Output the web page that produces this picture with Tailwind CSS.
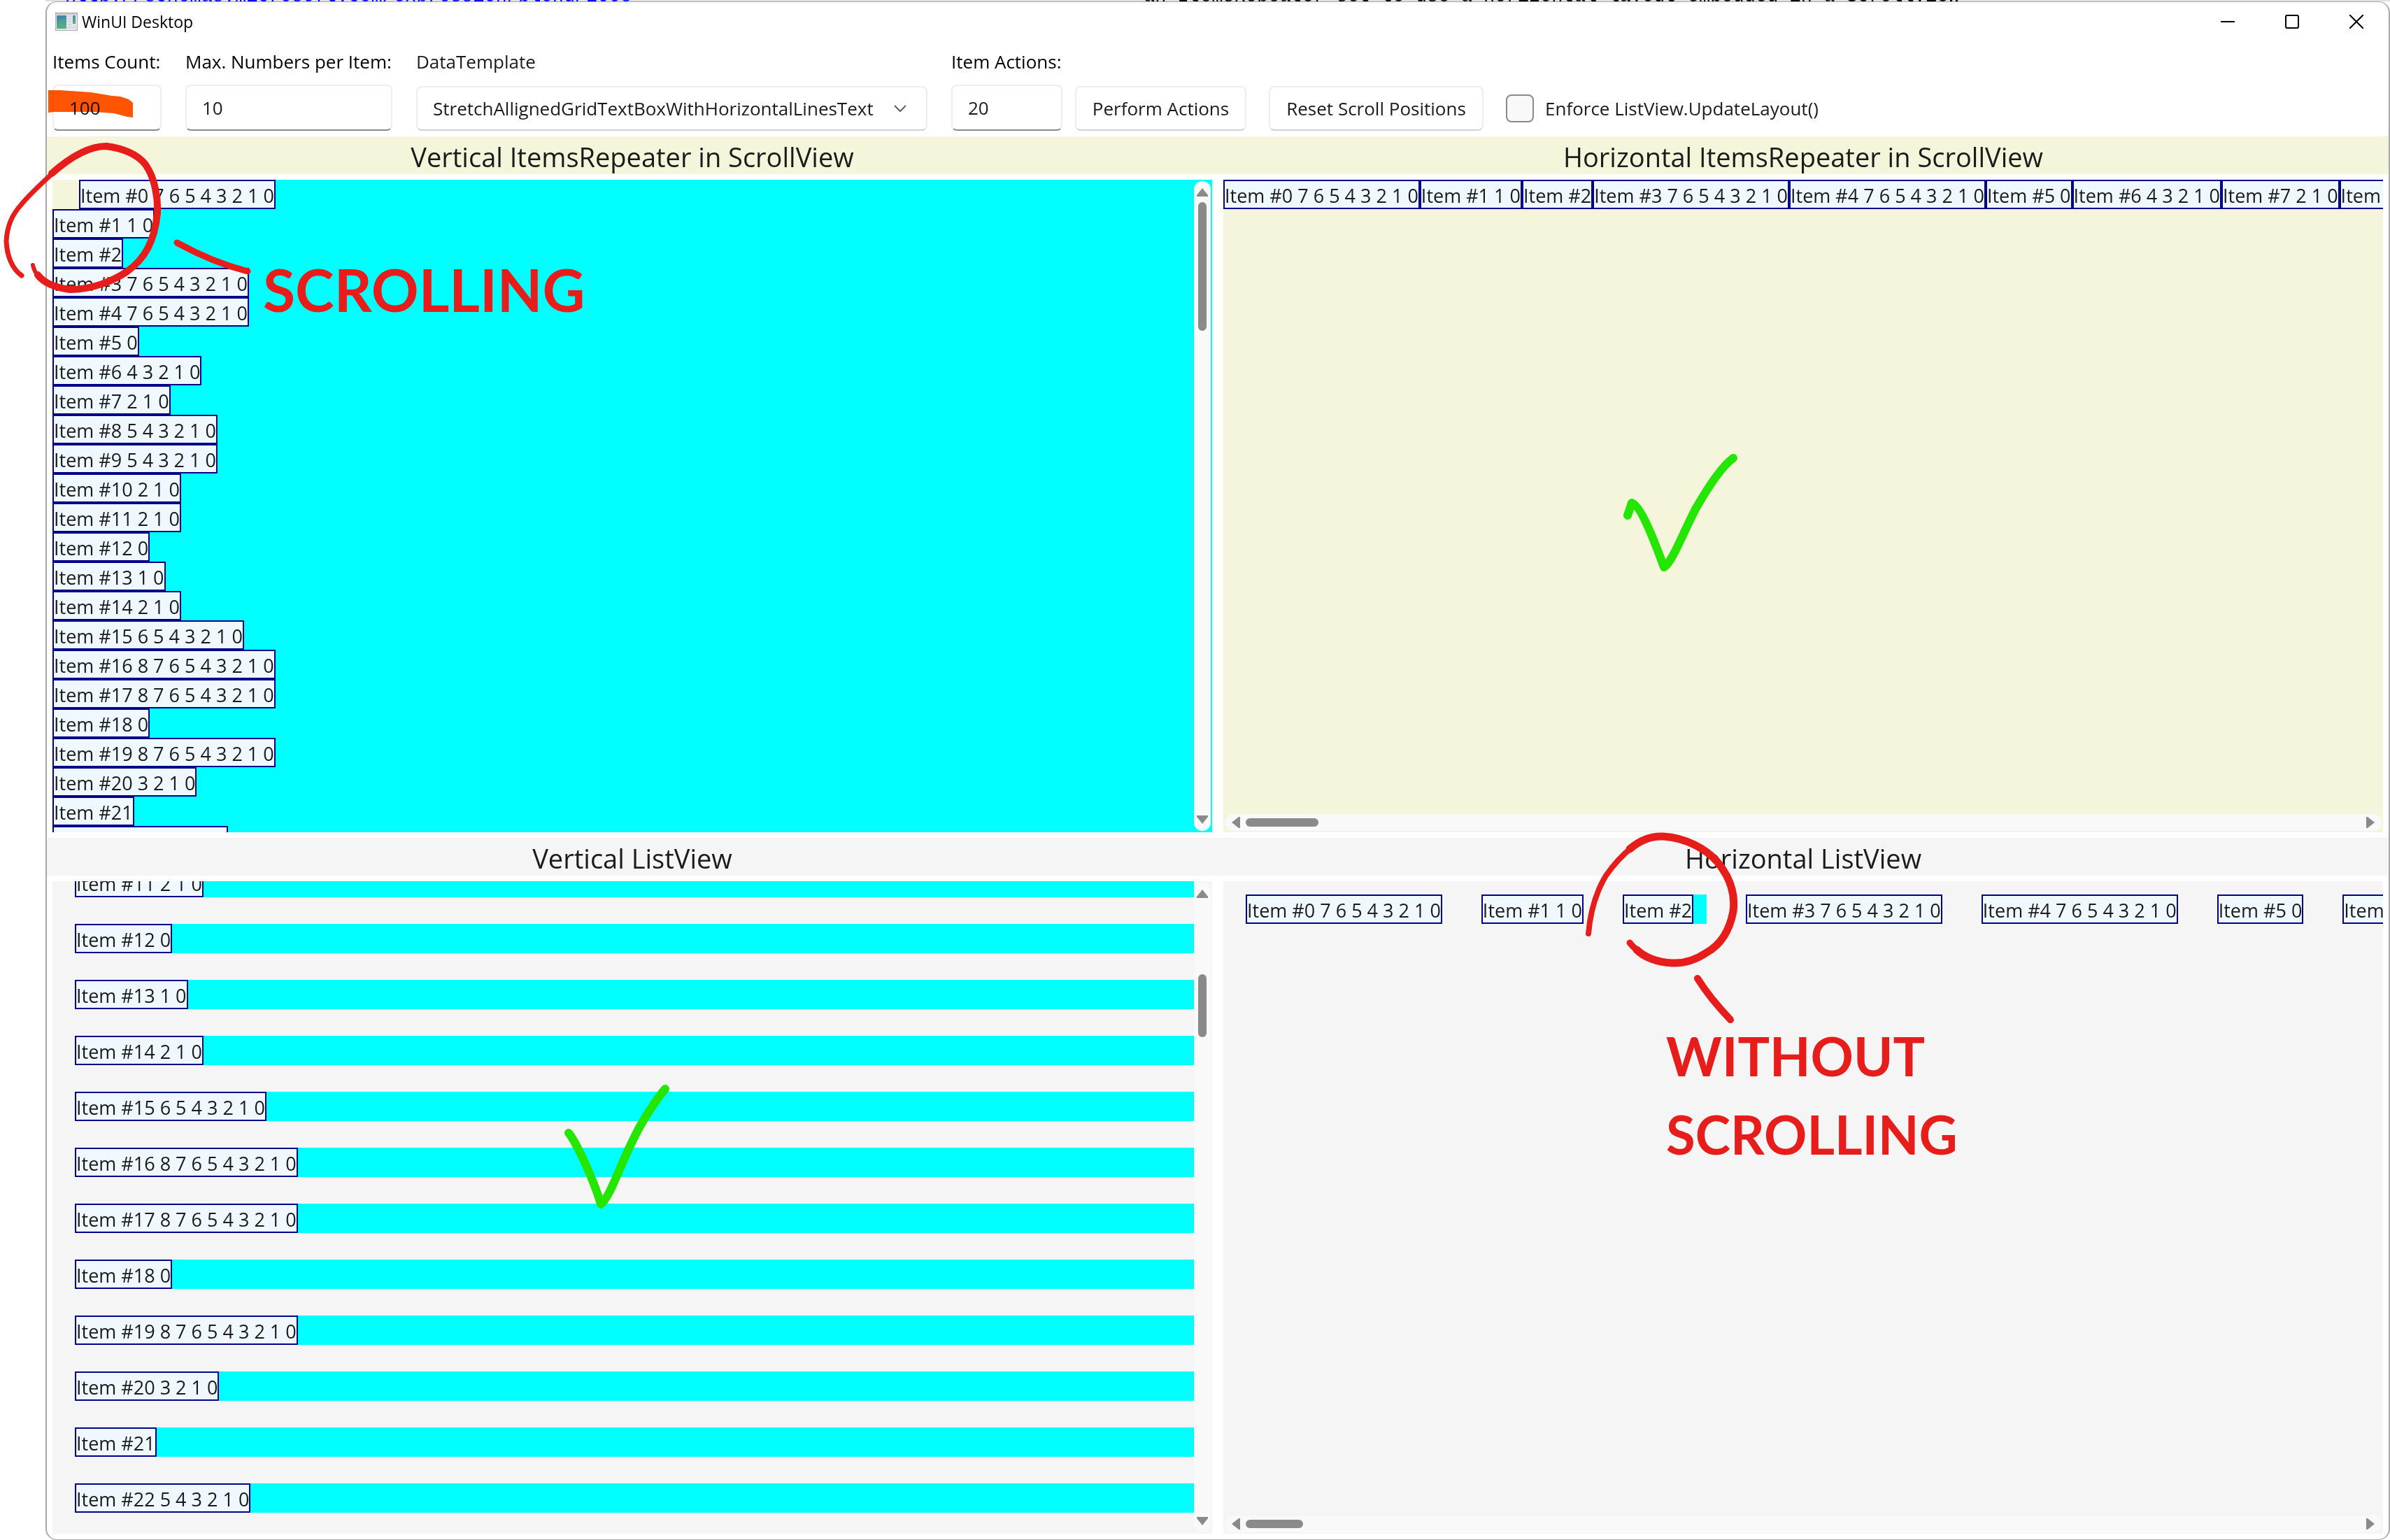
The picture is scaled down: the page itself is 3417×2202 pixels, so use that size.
<!DOCTYPE html>
<html lang="en">
<head>
<meta charset="utf-8">
<title>WinUI Desktop</title>
<script src="https://cdn.jsdelivr.net/npm/@tailwindcss/browser@4"></script>
</head>
<body class="relative flex h-screen flex-col overflow-hidden bg-white font-['Open_Sans','Noto_Sans',sans-serif] text-[27px] leading-[38px] text-[#1b1b1b]">

<!-- Editor lines showing above the window -->
<div class="ml-[65px] flex h-0.5 shrink-0 items-end overflow-hidden bg-[#e0e0e0] pl-7 font-['Liberation_Mono',monospace] leading-[30px] whitespace-nowrap" aria-hidden="true">
  <span class="-mb-2 w-[1542px] text-[#0000ff]">http://schemas.microsoft.com/expression/blend/2008</span>
  <span class="-mb-2 text-black">an ItemsRepeater set to use a horizontal layout embedded in a ScrollView</span>
</div>

<!-- Window -->
<div class="ml-[65px] flex min-h-0 flex-1 flex-col overflow-hidden rounded-2xl border-x-2 border-y border-[#a8a8a8] bg-white">

  <!-- Title bar -->
  <header class="flex h-14 shrink-0 items-center pl-3 text-black">
    <svg class="h-[26px] w-8" viewBox="0 0 32 26">
      <defs>
        <linearGradient id="pane" x1="0" y1="0" x2="0" y2="1"><stop offset="0" stop-color="#4a8fb5"/><stop offset="1" stop-color="#58b078"/></linearGradient>
      </defs>
      <rect x="0.5" y="0.5" width="31" height="25" fill="#e4e6e9" stroke="#a9adb3"/>
      <rect x="1" y="1" width="30" height="2" fill="#c3c7cc"/>
      <rect x="2" y="4" width="14" height="19" fill="url(#pane)"/>
      <path d="M2 12q7-1 14-6V4H2z" fill="#3a7fa8" opacity=".5"/>
      <path d="M18 5h5M18 9h5M18 13h5M18 17h5M18 21h5" stroke="#bfc2c6"/>
      <rect x="25" y="4" width="4" height="12" fill="url(#pane)"/>
      <path d="M25 21h4" stroke="#bfc2c6"/>
    </svg>
    <h1 class="ml-1.5 flex-1 text-[23px]">WinUI Desktop</h1>
    <div class="flex">
      <button class="grid h-14 w-[92px] place-items-center" aria-label="Minimize"><svg class="h-5 w-5" viewBox="0 0 20 20"><path d="M0 10h20" stroke="#000" stroke-width="2"/></svg></button>
      <button class="grid h-14 w-[92px] place-items-center" aria-label="Maximize"><svg class="h-5 w-5" viewBox="0 0 20 20"><rect x="1" y="1" width="18" height="18" rx="2" fill="none" stroke="#000" stroke-width="2"/></svg></button>
      <button class="grid h-14 w-[92px] place-items-center" aria-label="Close"><svg class="h-5 w-5" viewBox="0 0 20 20"><path d="M0 0l20 20M20 0L0 20" stroke="#000" stroke-width="2"/></svg></button>
    </div>
  </header>

  <!-- Toolbar -->
  <form class="flex h-[136px] shrink-0 items-end pb-2 pl-2 text-[26px]">
    <div class="flex w-[156px] flex-col gap-[14px]">
      <label for="count" class="whitespace-nowrap text-black">Items Count:</label>
      <input id="count" value="100" class="h-[66px] w-full rounded-lg border-2 border-[#eeeeee] border-b-[#8a8a8a] pl-[22px]">
    </div>
    <div class="ml-[34px] flex w-[296px] flex-col gap-[14px]">
      <label for="max" class="whitespace-nowrap text-black">Max. Numbers per Item:</label>
      <input id="max" value="10" class="h-[66px] w-full rounded-lg border-2 border-[#eeeeee] border-b-[#8a8a8a] pl-[22px]">
    </div>
    <div class="relative ml-[34px] flex w-[731px] flex-col gap-4">
      <label for="template">DataTemplate</label>
      <select id="template" class="h-16 w-full appearance-none rounded-lg border-2 border-[#eeeeee] border-b-[#d2d2d2] pl-[22px]"><option>StretchAllignedGridTextBoxWithHorizontalLinesText</option></select>
      <svg class="pointer-events-none absolute right-[30px] bottom-[26px] h-3 w-[18px]" viewBox="0 0 18 12"><path d="M1 2l8 8 8-8" fill="none" stroke="#606060" stroke-width="2"/></svg>
    </div>
    <div class="ml-[34px] flex w-[159px] flex-col gap-[14px]">
      <label for="actions" class="whitespace-nowrap text-black">Item Actions:</label>
      <input id="actions" value="20" class="h-[66px] w-full rounded-lg border-2 border-[#eeeeee] border-b-[#8a8a8a] pl-[22px]">
    </div>
    <button type="button" class="ml-[18px] h-16 w-[245px] rounded-lg border-2 border-[#eeeeee] border-b-[#d2d2d2]">Perform Actions</button>
    <button type="button" class="ml-8 h-16 w-[307px] rounded-lg border-2 border-[#eeeeee] border-b-[#d2d2d2]">Reset Scroll Positions</button>
    <div class="ml-8 flex h-16 items-center gap-4">
      <input id="enforce" type="checkbox" class="size-10 appearance-none rounded-lg border-2 border-[#8a8a8a] bg-[#f9f9f9]">
      <label for="enforce">Enforce ListView.UpdateLayout()</label>
    </div>
  </form>

  <!-- Repeater headings -->
  <div class="grid h-[54px] shrink-0 grid-cols-2 items-center bg-[#f5f5dc] pt-1 text-center text-[38px]">
    <h2>Vertical ItemsRepeater in ScrollView</h2>
    <h2>Horizontal ItemsRepeater in ScrollView</h2>
  </div>

  <div class="grid min-h-0 flex-1 grid-cols-2 gap-4 p-2">
    <section class="relative min-h-0 min-w-0 overflow-hidden bg-[#00ffff]" aria-label="Vertical ItemsRepeater">
      <ul class="flex flex-col leading-[41px] [&>li]:flex [&_span]:h-[42px] [&_span]:border-2 [&_span]:border-[#00008b] [&_span]:bg-[#f0f8ff] [&_span]:whitespace-nowrap">
        <li class="w-fit bg-[#f5f5dc] pl-[38px]"><span>Item #0 7 6 5 4 3 2 1 0</span></li>
        <li><span>Item #1 1 0</span></li>
        <li><span>Item #2</span></li>
        <li><span>Item #3 7 6 5 4 3 2 1 0</span></li>
        <li><span>Item #4 7 6 5 4 3 2 1 0</span></li>
        <li><span>Item #5 0</span></li>
        <li><span>Item #6 4 3 2 1 0</span></li>
        <li><span>Item #7 2 1 0</span></li>
        <li><span>Item #8 5 4 3 2 1 0</span></li>
        <li><span>Item #9 5 4 3 2 1 0</span></li>
        <li><span>Item #10 2 1 0</span></li>
        <li><span>Item #11 2 1 0</span></li>
        <li><span>Item #12 0</span></li>
        <li><span>Item #13 1 0</span></li>
        <li><span>Item #14 2 1 0</span></li>
        <li><span>Item #15 6 5 4 3 2 1 0</span></li>
        <li><span>Item #16 8 7 6 5 4 3 2 1 0</span></li>
        <li><span>Item #17 8 7 6 5 4 3 2 1 0</span></li>
        <li><span>Item #18 0</span></li>
        <li><span>Item #19 8 7 6 5 4 3 2 1 0</span></li>
        <li><span>Item #20 3 2 1 0</span></li>
        <li><span>Item #21</span></li>
        <li><span>Item #22 5 4 3 2 1 0</span></li>
      </ul>
      <div class="absolute top-0.5 right-0.5 bottom-0.5 flex w-6 flex-col items-center rounded-full bg-[#f9f9f9] py-[10px]">
        <svg class="h-3 w-4" viewBox="0 0 16 12"><path d="M8 0l8 10v2H0v-2z" fill="#8a8a8a"/></svg>
        <div class="mt-2 h-[184px] w-3 rounded-full bg-[#8a8a8a]"></div>
        <svg class="mt-auto h-3 w-4" viewBox="0 0 16 12"><path d="M8 12l8-10V0H0v2z" fill="#8a8a8a"/></svg>
      </div>
    </section>
    <section class="relative min-h-0 min-w-0 overflow-hidden bg-[#f5f5dc]" aria-label="Horizontal ItemsRepeater">
      <ul class="flex leading-[41px] [&>li]:h-[42px] [&>li]:shrink-0 [&>li]:border-2 [&>li]:border-[#00008b] [&>li]:bg-[#f0f8ff] [&>li]:whitespace-nowrap">
        <li>Item #0 7 6 5 4 3 2 1 0</li>
        <li>Item #1 1 0</li>
        <li>Item #2</li>
        <li>Item #3 7 6 5 4 3 2 1 0</li>
        <li>Item #4 7 6 5 4 3 2 1 0</li>
        <li>Item #5 0</li>
        <li>Item #6 4 3 2 1 0</li>
        <li>Item #7 2 1 0</li>
        <li>Item #8 5 4 3 2 1 0</li>
      </ul>
      <div class="absolute right-0.5 bottom-0.5 left-0.5 flex h-6 items-center rounded-full bg-[#f9f9f9] px-[10px]">
        <svg class="h-4 w-3" viewBox="0 0 12 16"><path d="M0 8l10-8h2v16h-2z" fill="#8a8a8a"/></svg>
        <div class="ml-2 h-3 w-[104px] rounded-full bg-[#8a8a8a]"></div>
        <svg class="ml-auto h-4 w-3" viewBox="0 0 12 16"><path d="M12 8L2 0H0v16h2z" fill="#8a8a8a"/></svg>
      </div>
    </section>
  </div>

  <!-- ListView headings -->
  <div class="grid h-[54px] shrink-0 grid-cols-2 items-center bg-[#f5f5f5] pt-1 text-center text-[38px]">
    <h2>Vertical ListView</h2>
    <h2>Horizontal ListView</h2>
  </div>

  <div class="grid min-h-0 flex-1 grid-cols-2 gap-4 p-2">
    <section class="relative flex min-h-0 min-w-0 flex-col justify-end overflow-hidden bg-[#f5f5f5] pb-[30px]" aria-label="Vertical ListView">
      <ul class="mr-[26px] ml-8 flex flex-col gap-[38px] leading-[41px] [&>li]:flex [&>li]:bg-[#00ffff] [&_span]:h-[42px] [&_span]:border-2 [&_span]:border-[#00008b] [&_span]:bg-[#f0f8ff] [&_span]:whitespace-nowrap">
        <li><span>Item #11 2 1 0</span></li>
        <li><span>Item #12 0</span></li>
        <li><span>Item #13 1 0</span></li>
        <li><span>Item #14 2 1 0</span></li>
        <li><span>Item #15 6 5 4 3 2 1 0</span></li>
        <li><span>Item #16 8 7 6 5 4 3 2 1 0</span></li>
        <li><span>Item #17 8 7 6 5 4 3 2 1 0</span></li>
        <li><span>Item #18 0</span></li>
        <li><span>Item #19 8 7 6 5 4 3 2 1 0</span></li>
        <li><span>Item #20 3 2 1 0</span></li>
        <li><span>Item #21</span></li>
        <li><span>Item #22 5 4 3 2 1 0</span></li>
      </ul>
      <div class="absolute top-0.5 right-0.5 bottom-0.5 flex w-6 flex-col items-center rounded-full bg-[#f9f9f9] py-[10px]">
        <svg class="h-3 w-4" viewBox="0 0 16 12"><path d="M8 0l8 10v2H0v-2z" fill="#8a8a8a"/></svg>
        <div class="mt-[109px] h-[90px] w-3 rounded-full bg-[#8a8a8a]"></div>
        <svg class="mt-auto h-3 w-4" viewBox="0 0 16 12"><path d="M8 12l8-10V0H0v2z" fill="#8a8a8a"/></svg>
      </div>
    </section>
    <section class="relative min-h-0 min-w-0 overflow-hidden bg-[#f5f5f5] pt-[19px] pl-8" aria-label="Horizontal ListView">
      <ul class="flex gap-14 leading-[41px] [&>li]:flex [&>li]:min-w-[120px] [&>li]:shrink-0 [&>li]:bg-[#00ffff] [&_span]:h-[42px] [&_span]:border-2 [&_span]:border-[#00008b] [&_span]:bg-[#f0f8ff] [&_span]:whitespace-nowrap">
        <li><span>Item #0 7 6 5 4 3 2 1 0</span></li>
        <li><span>Item #1 1 0</span></li>
        <li><span>Item #2</span></li>
        <li><span>Item #3 7 6 5 4 3 2 1 0</span></li>
        <li><span>Item #4 7 6 5 4 3 2 1 0</span></li>
        <li><span>Item #5 0</span></li>
        <li><span>Item #6 4 3 2 1 0</span></li>
      </ul>
      <div class="absolute right-0.5 bottom-0.5 left-0.5 flex h-6 items-center rounded-full bg-[#f9f9f9] px-[10px]">
        <svg class="h-4 w-3" viewBox="0 0 12 16"><path d="M0 8l10-8h2v16h-2z" fill="#8a8a8a"/></svg>
        <div class="ml-2 h-3 w-[82px] rounded-full bg-[#8a8a8a]"></div>
        <svg class="ml-auto h-4 w-3" viewBox="0 0 12 16"><path d="M12 8L2 0H0v16h2z" fill="#8a8a8a"/></svg>
      </div>
    </section>
  </div>
</div>

<!-- Pen annotations drawn over the window -->
<svg class="pointer-events-none absolute inset-0 h-full w-full mix-blend-multiply" viewBox="0 0 3417 2202" aria-hidden="true">
  <path d="M69 129H86L130 132 160 137 172 138 184 142 190 147V168L182 167 163 162 135 160 77 160 69 161z" fill="#ff5500"/>
</svg>
<svg class="pointer-events-none absolute inset-0 h-full w-full" viewBox="0 0 3417 2202" fill="none" stroke-linecap="round" stroke-linejoin="round" aria-hidden="true">
  <g stroke="#e71d1c">
    <path stroke-width="7" d="M31 394C18 385 10 367 9 345C10 322 18 306 30 293C42 278 60 262 78 245"/>
    <path stroke-width="10" d="M74 248C100 225 128 209 152 209C175 212 195 220 207 234C222 254 226 285 225 305C221 345 207 370 182 388C160 403 130 414 100 414C78 411 62 404 54 393"/>
    <path stroke-width="6" d="M54 394C50 389 48 384 47 379"/>
    <path stroke-width="9" d="M253 347C280 362 315 378 354 388"/>
    <path stroke-width="8" d="M2271 1335C2274 1300 2284 1272 2296 1252C2308 1235 2320 1222 2333 1212"/>
    <path stroke-width="11" d="M2330 1214C2345 1201 2360 1195 2378 1196C2412 1198 2440 1215 2455 1232C2474 1255 2481 1280 2478 1303C2472 1335 2458 1352 2440 1362C2425 1372 2410 1378 2391 1377C2368 1376 2350 1368 2340 1358"/>
    <path stroke-width="9" d="M2341 1359C2336 1355 2333 1352 2330 1348"/>
    <path stroke-width="10" d="M2427 1399C2440 1420 2455 1438 2474 1458"/>
  </g>
  <g stroke="#25e600" stroke-width="12">
    <path d="M2327 737L2333 719C2345 722 2364 770 2379 811C2390 805 2405 765 2424 728C2440 700 2460 668 2478 655"/>
    <path d="M813 1620C825 1635 850 1690 859 1722C872 1712 885 1670 905 1630C918 1602 940 1570 951 1557"/>
  </g>
</svg>
<p class="pointer-events-none absolute top-[374px] left-[376px] font-['Lato',sans-serif] text-[84px] leading-[80px] font-bold text-[#e71d1c]">SCROLLING</p>
<p class="pointer-events-none absolute top-[1454px] left-[2382px] font-['Lato',sans-serif] text-[76px] leading-[112px] font-bold text-[#e71d1c]">WITHOUT<br>SCROLLING</p>
</body>
</html>
